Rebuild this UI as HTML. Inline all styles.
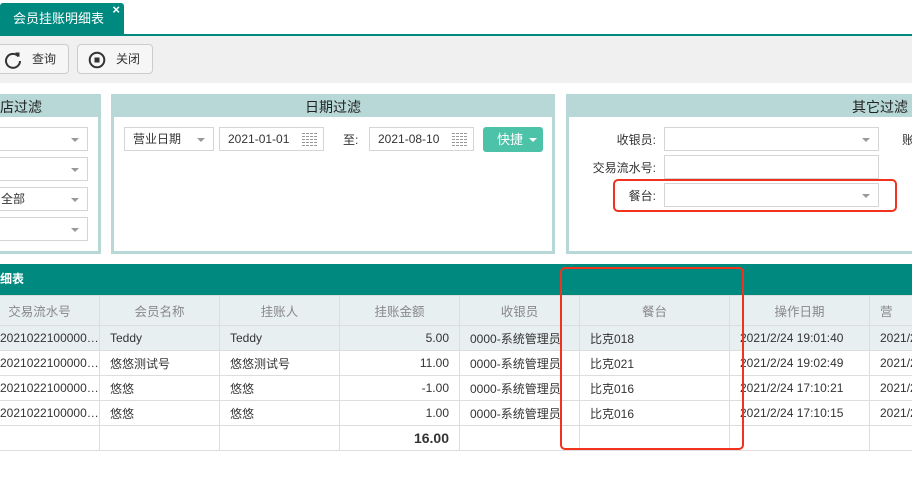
<!DOCTYPE html>
<html><head><meta charset="utf-8"><style>
*{box-sizing:border-box;margin:0;padding:0}
body{width:912px;height:481px;overflow:hidden;background:#fff;font-family:"Liberation Sans","Noto Sans CJK SC",sans-serif;font-size:12px;color:#333;position:relative}
.abs{position:absolute}
.tab{left:0;top:3px;width:124px;height:32px;background:#00897f;color:#fff;font-size:13px;line-height:32px;padding-left:13px;border-radius:3px 3px 0 0}
.tab .x{position:absolute;right:4px;top:-9px;font-size:13px;font-weight:bold}
.line{left:0;top:34px;width:912px;height:2px;background:#00897f}
.tb{left:0;top:36px;width:912px;height:47px;background:#f0f0f0}
.btn{top:44px;height:30px;border:1px solid #ccc;border-radius:4px;background:#f6f6f6;font-size:12px;line-height:28px}
.panel{top:94px;height:160px;background:#b8d8d8;padding:3px}
.panel .hd{height:20px;line-height:20px;font-size:14px;color:#222}
.panel .bd{position:absolute;left:3px;right:3px;top:23px;bottom:3px;background:#fff}
.sel{height:24px;border:1px solid #d5d5d5;background:#fff;line-height:22px;padding-left:8px;font-size:12px}
.sel .ar{position:absolute;right:8px;top:10px;width:0;height:0;border-left:4px solid transparent;border-right:4px solid transparent;border-top:4px solid #999}
.cal{position:absolute;right:5px;top:5px;width:16px;height:13px;background:repeating-linear-gradient(0deg,transparent 0 1px,#fff 1px 3px),repeating-linear-gradient(90deg,#999 0 3px,#fff 3px 4px)}
.lbl{font-size:12px;text-align:right;width:100px}
table{position:absolute;left:-21px;top:295px;border-collapse:collapse;table-layout:fixed;width:990px}
td,th{border:1px solid #ddd;height:25px;padding:0 10px;font-size:12px;white-space:nowrap;overflow:hidden}
th{font-weight:normal;color:#888;background:#e8eff1;height:30px;font-size:12.5px}
tr.h td{background:#e8eff1}
.r{text-align:right}
.red{border:2px solid #f0321e;border-radius:5px}
</style></head><body>
<div class="abs tab">会员挂账明细表<span class="x">×</span></div>
<div class="abs line"></div>
<div class="abs tb"></div>
<div class="abs btn" style="left:-3px;width:72px">
<svg class="abs" style="left:6px;top:6px" width="18" height="18" viewBox="0 0 18 18"><path d="M14.5 5.5A7 7 0 1 0 16 10" fill="none" stroke="#333" stroke-width="2"/><path d="M11 1.5L15.5 1.5 15.5 6z" fill="#333"/></svg>
<span class="abs" style="left:34px">查询</span></div>
<div class="abs btn" style="left:77px;width:76px">
<svg class="abs" style="left:10px;top:6px" width="18" height="18" viewBox="0 0 18 18"><circle cx="9" cy="9" r="7.3" fill="none" stroke="#333" stroke-width="2"/><rect x="6.5" y="6.5" width="5" height="5" fill="#333"/></svg>
<span class="abs" style="left:38px">关闭</span></div>

<div class="abs panel" style="left:-10px;width:111px"><div class="hd" style="padding-left:7px">店过滤</div><div class="bd">
<div class="abs sel" style="left:-3px;top:10px;width:98px"><span class="ar"></span></div>
<div class="abs sel" style="left:-3px;top:40px;width:98px"><span class="ar"></span></div>
<div class="abs sel" style="left:-3px;top:70px;width:98px;padding-left:10px">全部<span class="ar"></span></div>
<div class="abs sel" style="left:-3px;top:100px;width:98px"><span class="ar"></span></div>
</div></div>

<div class="abs panel" style="left:111px;width:444px"><div class="hd" style="text-align:center">日期过滤</div><div class="bd">
<div class="abs sel" style="left:10px;top:10px;width:90px">营业日期<span class="ar"></span></div>
<div class="abs sel" style="left:105px;top:10px;width:105px">2021-01-01<span class="cal"></span></div>
<div class="abs" style="left:229px;top:14px">至:</div>
<div class="abs sel" style="left:255px;top:10px;width:105px">2021-08-10<span class="cal"></span></div>
<div class="abs" style="left:369px;top:10px;width:60px;height:25px;background:#4cc2a8;border-radius:3px;color:#fff;line-height:25px;padding-left:14px;font-size:13px">快捷<span class="abs" style="right:6px;top:11px;border-left:4px solid transparent;border-right:4px solid transparent;border-top:4px solid #fff"></span></div>
</div></div>

<div class="abs panel" style="left:566px;width:360px"><div class="hd" style="padding-left:283px">其它过滤</div><div class="bd">
<div class="abs lbl" style="left:-13px;top:14px">收银员:</div>
<div class="abs sel" style="left:95px;top:10px;width:215px"><span class="ar"></span></div>
<div class="abs" style="left:333px;top:14px">账</div>
<div class="abs lbl" style="left:-13px;top:42px">交易流水号:</div>
<div class="abs sel" style="left:95px;top:38px;width:215px"></div>
<div class="abs lbl" style="left:-13px;top:70px">餐台:</div>
<div class="abs sel" style="left:95px;top:66px;width:215px"><span class="ar"></span></div>
</div></div>
<div class="abs red" style="left:613px;top:179px;width:284px;height:33px"></div>

<div class="abs" style="left:0;top:264px;width:912px;height:31px;background:#00897f;color:#fff;font-weight:bold;font-size:12px;line-height:31px;padding-left:0">细表</div>
<table>
<colgroup><col style="width:120px"><col style="width:120px"><col style="width:120px"><col style="width:120px"><col style="width:120px"><col style="width:150px"><col style="width:140px"><col style="width:100px"></colgroup>
<tr><th>交易流水号</th><th>会员名称</th><th>挂账人</th><th>挂账金额</th><th>收银员</th><th>餐台</th><th>操作日期</th><th style="text-align:left">营</th></tr>
<tr class="h"><td style="padding:0 0 0 20px">2021022100000…</td><td>Teddy</td><td>Teddy</td><td class="r">5.00</td><td style="padding-right:0">0000-系统管理员</td><td>比克018</td><td>2021/2/24 19:01:40</td><td>2021/2</td></tr>
<tr><td style="padding:0 0 0 20px">2021022100000…</td><td>悠悠测试号</td><td>悠悠测试号</td><td class="r">11.00</td><td style="padding-right:0">0000-系统管理员</td><td>比克021</td><td>2021/2/24 19:02:49</td><td>2021/2</td></tr>
<tr><td style="padding:0 0 0 20px">2021022100000…</td><td>悠悠</td><td>悠悠</td><td class="r">-1.00</td><td style="padding-right:0">0000-系统管理员</td><td>比克016</td><td>2021/2/24 17:10:21</td><td>2021/2</td></tr>
<tr><td style="padding:0 0 0 20px">2021022100000…</td><td>悠悠</td><td>悠悠</td><td class="r">1.00</td><td style="padding-right:0">0000-系统管理员</td><td>比克016</td><td>2021/2/24 17:10:15</td><td>2021/2</td></tr>
<tr><td></td><td></td><td></td><td class="r" style="font-weight:bold;font-size:14px">16.00</td><td></td><td></td><td></td><td></td></tr>
</table>
<div class="abs red" style="left:560px;top:267px;width:184px;height:183px"></div>
</body></html>
